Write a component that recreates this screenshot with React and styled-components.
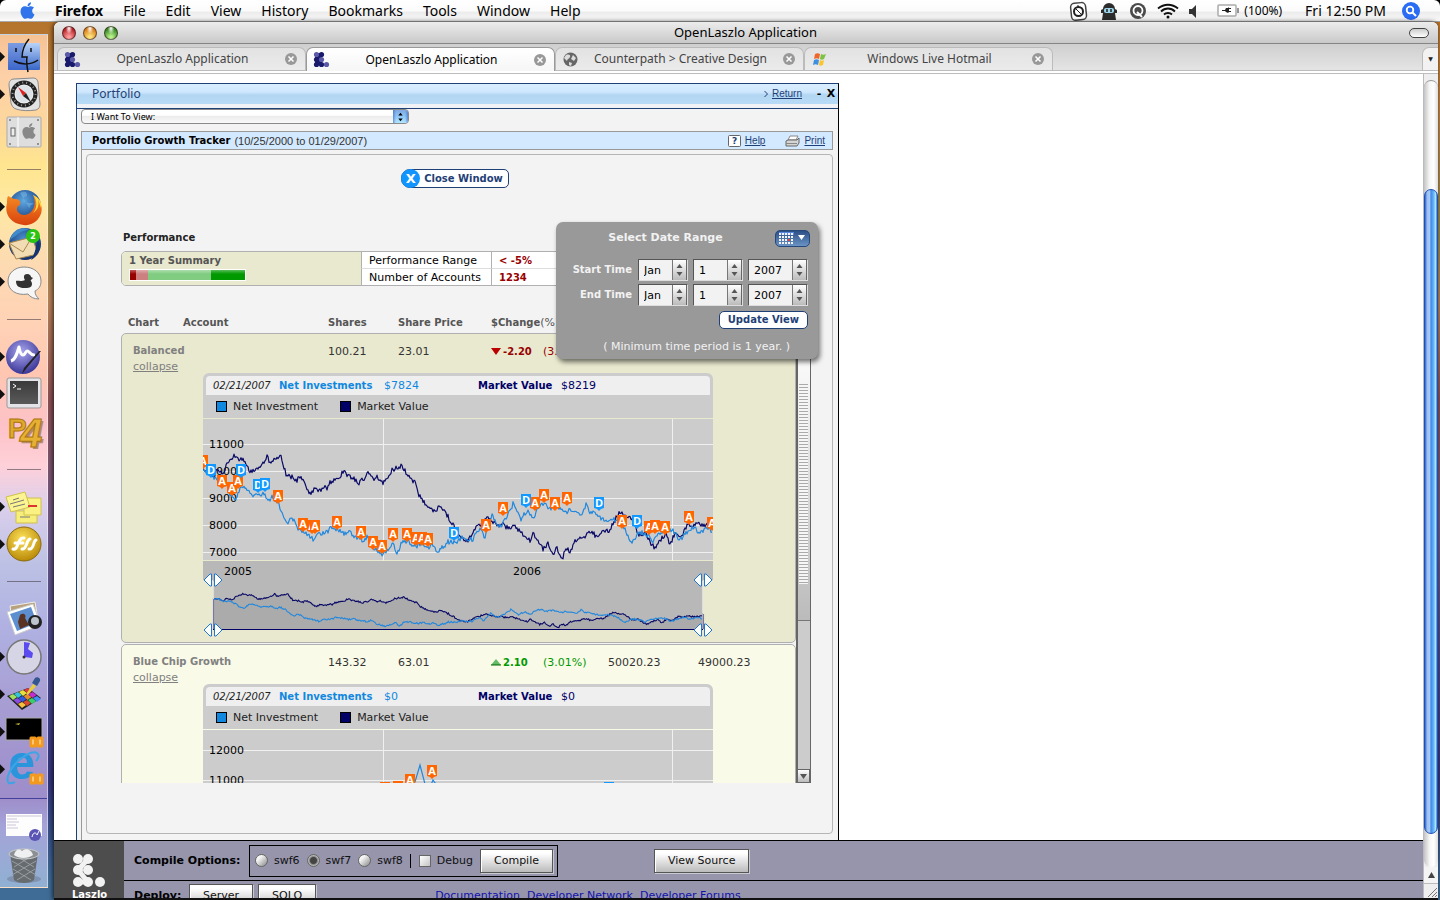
import React from "react";
import styled, { createGlobalStyle, css } from "styled-components";
import { FaApple } from "react-icons/fa";

const flash = `Verdana, "DejaVu Sans", sans-serif`;
const mac = `"Lucida Grande", "Noto Sans", sans-serif`;
const arial = `"Liberation Sans", Arial, sans-serif`;
const navy = "#1f3f77";

const Global = createGlobalStyle`
  *, *::before, *::after { box-sizing: border-box; }
  body { margin: 0; background: #000; }
  button, select, input { font: inherit; color: inherit; margin: 0; }
`;

/* ---------- desktop ---------- */

const Desktop = styled.div`
  height: 100vh;
  display: flex;
  flex-direction: column;
  overflow: hidden;
  font-family: ${flash};
  font-size: 11px;
  line-height: 16px;
  color: #222;
`;

const MenuBar = styled.nav`
  flex: none;
  height: 22px;
  display: flex;
  align-items: center;
  gap: 20px;
  padding: 0 20px;
  border-bottom: 1px solid #a8a8a8;
  border-radius: 6px 6px 0 0;
  background: linear-gradient(#fff 0, #fbfbfb 50%, #ececec 60%, #fafafa 100%);
  font-family: ${mac};
  font-size: 14px;
  line-height: 20px;
  color: #000;
`;

const MenuItem = styled.a`
  color: inherit;
  text-decoration: none;
  font-weight: ${(p) => (p.$strong ? 700 : 400)};
`;

const AppleMark = styled.span`
  display: flex;
  width: 15px;
  color: #2f74ea;
`;

const StatusArea = styled.div`
  margin-left: auto;
  display: flex;
  align-items: center;
  gap: 13px;
`;

const Battery = styled.span`
  display: flex;
  align-items: center;
  gap: 5px;
  margin-left: 4px;
  font-size: 12px;
`;

const Clock = styled.time`
  margin: 0 3px 0 10px;
`;

const Workspace = styled.div`
  flex: 1;
  min-height: 0;
  display: flex;
  padding-right: 2px;
  background: linear-gradient(#b5742c 0, #bf8144 80px, #98894c 210px, #b98259 280px, #8b5055 380px,
    #705a86 500px, #46468c 640px, #33357c 760px, #3f6c96 860px);
`;

/* ---------- dock ---------- */

const Dock = styled.aside`
  flex: none;
  width: 48px;
  margin: 12px 6px 12px 0;
  border: 1px solid rgba(255, 255, 255, 0.45);
  border-left: 0;
  background: linear-gradient(#f6c294 0, #fdd0a8 40px, #fdd79c 90px, #ffe58f 130px, #ffe9a3 170px,
    #fddab2 230px, #ffd2b6 290px, #ffc6b2 340px, #fdc2c8 390px, #ffd0d8 430px, #dccfec 470px,
    #bcc1e4 530px, #b0b1e2 590px, #a79dd3 670px, #9d8dca 763px, #a5a3d8 790px, #90b0d2 852px);
`;

const DockApps = styled.ul`
  list-style: none;
  margin: 3px 0 0;
  padding: 0;
  height: 750px;
  display: grid;
  grid-auto-rows: 1fr;
`;

const DockSlot = styled.li`
  display: flex;
  align-items: center;
`;

const RunMark = styled.span`
  width: 5px;
  height: 10px;
  margin-right: 1px;
  background: ${(p) => (p.$on ? "#111" : "transparent")};
  clip-path: polygon(0 0, 100% 50%, 0 100%);
`;

const DockRule = styled.span`
  width: 34px;
  height: 1px;
  margin-left: 1px;
  background: rgba(60, 50, 60, 0.55);
`;

const DockShelf = styled(DockApps)`
  height: 92px;
  margin: 10px 0 0;
  padding: 10px 0 6px;
  border-top: 1px solid #45409a;
`;

/* ---------- browser window ---------- */

const Browser = styled.main`
  flex: 1;
  min-width: 0;
  display: flex;
  flex-direction: column;
  background: #fff;
  border-radius: 6px 6px 0 0;
  border-bottom: 2px solid #111;
  box-shadow: -1px 0 5px rgba(0, 0, 0, 0.75);
`;

const TitleBar = styled.header`
  flex: none;
  height: 22px;
  display: flex;
  align-items: center;
  padding: 0 9px 0 8px;
  border-bottom: 1px solid #858585;
  border-radius: 6px 6px 0 0;
  background: linear-gradient(#ececec, #c9c9c9);
  font-family: ${mac};
  font-size: 13px;
  color: #000;
`;

const Lights = styled.div`
  width: 60px;
  display: flex;
  gap: 7px;
`;

const Light = styled.button`
  width: 14px;
  height: 14px;
  padding: 0;
  border: 1px solid rgba(40, 20, 20, 0.6);
  border-radius: 50%;
  background: radial-gradient(ellipse at 50% 12%, #fff 0, rgba(255, 255, 255, 0) 38%),
    radial-gradient(circle at 50% 85%, ${(p) => p.$glow} 10%, ${(p) => p.$tone} 70%);
`;

const WindowTitle = styled.h1`
  flex: 1;
  margin: 0;
  padding-bottom: 2px;
  text-align: center;
  font-size: 13px;
  font-weight: 400;
`;

const TitleEnd = styled.div`
  width: 60px;
  display: flex;
  justify-content: flex-end;
`;

const Pill = styled.button`
  width: 20px;
  height: 10px;
  padding: 0;
  border: 1px solid #444;
  border-radius: 5px;
  background: linear-gradient(#ccc, #fff);
`;

const TabStrip = styled.div`
  flex: none;
  height: 30px;
  display: flex;
  align-items: flex-start;
  padding: 3px 0 0 3px;
  border-bottom: 1px solid #bdbdbd;
  background: linear-gradient(#cfcfcf 0, #e4e4e4 26px, #bdbdbd 26px, #bdbdbd 27px, #fff 27px);
`;

const Tab = styled.div`
  flex: 0 1 249px;
  min-width: 0;
  height: 23px;
  display: flex;
  align-items: center;
  gap: 6px;
  padding: 0 8px 0 7px;
  border: 1px solid #bbb;
  border-bottom: 0;
  border-radius: 7px 7px 0 0;
  background: ${(p) => (p.$active ? "linear-gradient(#fff, #f6f6f6)" : "linear-gradient(#e2e2e2, #ebebeb)")};
  font-family: ${mac};
  font-size: 12px;
  color: ${(p) => (p.$active ? "#000" : "#444")};
  ${(p) => p.$active && css`height: 24px; border-color: #999;`}
`;

const TabLabel = styled.span`
  flex: 1;
  text-align: center;
  white-space: nowrap;
  overflow: hidden;
`;

const TabClose = styled.button`
  display: flex;
  padding: 0;
  border: 0;
  background: none;
`;

const TabMenu = styled.button`
  width: 16px;
  height: 23px;
  margin-left: auto;
  padding: 0;
  border: 1px solid #bbb;
  border-width: 1px 0 0 1px;
  border-radius: 7px 0 0 0;
  background: #f2f2f2;
  font-size: 6px;
  line-height: 10px;
`;

const Viewport = styled.div`
  flex: 1;
  min-height: 0;
  display: flex;
`;

const Page = styled.div`
  flex: 1;
  min-width: 0;
  display: flex;
  flex-direction: column;
`;

const PageBody = styled.div`
  flex: 1;
  min-height: 0;
  overflow: hidden;
  padding: 9px 22px 0;
`;

const ScrollRail = styled.div`
  flex: none;
  width: 15px;
  display: flex;
  flex-direction: column;
  border-left: 1px solid #bbb;
  background: #eee;
`;

const ScrollTrack = styled.div`
  flex: 1;
  margin-top: 6px;
  padding: 108px 0 33px;
  border-top: 1px solid #999;
  border-radius: 8px;
  background: linear-gradient(90deg, #c4c4c4, #f6f6f6 40%, #fff 70%, #ddd);
  display: flex;
`;

const ScrollThumb = styled.div`
  flex: 1;
  border-radius: 7px;
  border: 1px solid #1d4fb4;
  background: linear-gradient(90deg, #2d62cf 0, #9dc0f2 18%, #a9c9f6 38%, #3f8ae8 50%, #66b4fb 72%, #a8e4ff 88%, #4777b8);
`;

const ScrollEnd = styled.button`
  flex: none;
  height: 17px;
  padding: 0;
  border: 0;
  border-bottom: 1px solid #bbb;
  background: #f4f4f4;
  display: flex;
  align-items: center;
  justify-content: center;
`;

/* ---------- portfolio panel ---------- */

const Panel = styled.section`
  width: 100%;
  max-width: 763px;
  border: 1px solid ${navy};
  border-right-color: #000;
  background: #f3f3f3;
`;

const PanelHead = styled.header`
  height: 25px;
  display: flex;
  padding: 0 1px 4px 15px;
  align-items: center;
  border-bottom: 1px solid ${navy};
  background: linear-gradient(#d9eeff 0, #cfe7fd 40%, #b3d6f3 55%, #b7daf6 100%) 0 0 / 100% 20px no-repeat #f0f2f5;
`;

const PanelName = styled.h2`
  margin: 0 auto 0 0;
  font-family: ${mac};
  font-size: 12px;
  font-weight: 400;
  color: ${navy};
`;

const TextLink = styled.a`
  font-family: ${arial};
  font-size: 10px;
  color: ${navy};
`;

const Chevron = styled.svg`
  margin-right: 4px;
`;

const WindowKey = styled.button`
  width: 12px;
  padding: 0;
  border: 0;
  background: none;
  font-size: 11px;
  font-weight: 700;
  line-height: 16px;
  color: #000;
`;

const WindowKeys = styled.div`
  display: flex;
  margin-left: 11px;
`;

const ViewPicker = styled.div`
  width: 328px;
  height: 15px;
  margin-left: 4px;
  display: flex;
  border: 1px solid #8a8a8a;
  border-radius: 4px;
  overflow: hidden;
  background: linear-gradient(#fff 0, #fff 40%, #ececec 50%, #fafafa 100%);
`;

const bareSelect = css`
  appearance: none;
  flex: 1;
  min-width: 0;
  border: 0;
  border-radius: 0;
  background: transparent;
  color: #000;
`;

const ViewSelect = styled.select`
  ${bareSelect}
  padding: 0 0 0 9px;
  font-family: ${mac};
  font-size: 9px;
  line-height: 12px;
`;

const PickerCap = styled.span`
  width: 15px;
  display: flex;
  align-items: center;
  justify-content: center;
  background: linear-gradient(90deg, rgba(30, 80, 180, 0.5), transparent 20% 80%, rgba(30, 80, 180, 0.5)),
    linear-gradient(#7fa8e0, #8fc6f6 50%, #b4e6ff);
  pointer-events: none;
`;

const Tracker = styled.div`
  margin: 7px 5px 0 4px;
  border-left: 1px solid #999;
  padding-bottom: 20px;
`;

const TrackerHead = styled.header`
  height: 19px;
  display: flex;
  align-items: center;
  padding: 0 7px 0 10px;
  border: 1px solid #999;
  border-left: 0;
  background: #d3e9ff;
`;

const TrackerTitle = styled.h3`
  margin: 0;
  font-size: 10px;
  color: #000;
`;

const TrackerDates = styled.span`
  margin: 0 auto 0 4px;
  font-family: ${arial};
  font-size: 11px;
  color: #333;
`;

const IconLink = styled.span`
  display: flex;
  align-items: center;
  gap: 4px;
  margin-left: 20px;
`;

const Sheet = styled.div`
  position: relative;
  margin: 4px 0 0 4px;
  padding: 14px 21px 50px 34px;
  border: 1px solid #b5b5b5;
  border-radius: 4px;
`;

const CloseRow = styled.div`
  display: flex;
  justify-content: center;
  padding-right: 22px;
`;

const CloseWindow = styled.button`
  height: 19px;
  display: flex;
  align-items: center;
  gap: 4px;
  padding: 0 5px 0 0;
  border: 1px solid ${navy};
  border-radius: 9px 5px 5px 9px;
  background: #fff;
  color: ${navy};
  font-size: 10px;
  font-weight: 700;
`;

const CloseBadge = styled.span`
  width: 19px;
  height: 19px;
  margin-left: -1px;
  border-radius: 50%;
  background: #1294ff;
  color: #fff;
  font-size: 13px;
  line-height: 19px;
`;

const SectionTitle = styled.h3`
  margin: 42px 0 5px 2px;
  font-size: 10px;
  line-height: 16px;
  color: #222;
`;

const SummaryTable = styled.table`
  width: 675px;
  height: 35px;
  border-collapse: separate;
  border-spacing: 0;
  border: 1px solid #b0b0b0;
  border-radius: 5px;
  background: #fff;
  table-layout: fixed;
  color: #000;
`;

const SummaryCell = styled.td`
  width: ${(p) => p.$width || "auto"};
  height: 16px;
  padding: 1px 7px 0;
  line-height: 15px;
  border-left: 1px solid #b0b0b0;
  border-bottom: ${(p) => (p.$last ? 0 : "1px solid #ddd")};
  ${(p) => p.$strong && css`font-weight: 700; font-size: 10px; color: #990000;`}
`;

const YearCell = styled.th`
  width: 239px;
  padding: 0 7px;
  text-align: left;
  vertical-align: top;
  border-radius: 4px 0 0 4px;
  background: #e9e9cf;
  color: #555;
  font-size: 10px;
  line-height: 17px;
`;

const Gauge = styled.div`
  width: 117px;
  height: 12px;
  display: flex;
  border: 1px solid #fff;
`;

const GaugePart = styled.span`
  flex: ${(p) => p.$share};
  background: linear-gradient(rgba(255, 255, 255, 0.35), rgba(255, 255, 255, 0) 40%), ${(p) => p.$tone};
`;

/* ---------- holdings ---------- */

const Holdings = styled.div`
  display: flex;
  margin-top: 28px;
`;

const HoldingsTable = styled.table`
  display: block;
  flex: 1;
`;

const rowGrid = css`
  display: grid;
  grid-template-columns: 55px 145px 70px 93px 52px 65px 90px 1fr;
`;

const HeadRow = styled.tr`
  ${rowGrid}
  height: 19px;
  padding-left: 7px;
`;

const HeadGroup = styled.thead`
  display: block;
`;

const HeadCell = styled.th`
  padding: 0;
  text-align: left;
  white-space: nowrap;
  font-size: 10px;
  line-height: 18px;
  color: #555;
`;

const HeadNote = styled.span`
  font-weight: 400;
  font-size: 11px;
`;

const ScrollBody = styled.tbody`
  display: flex;
  flex-direction: column;
  gap: 1px;
  height: 450px;
  overflow: hidden;
`;

const HoldingRow = styled.tr`
  ${rowGrid}
  flex: none;
  grid-template-rows: 16px 14px auto;
  padding: 9px 0 4px 6px;
  border: 1px solid #b0b0b0;
  border-radius: 5px;
  background: ${(p) => (p.$tinted ? "#e9e9cf" : "#fafae9")};
`;

const tones = { down: "#990000", up: "#009900", plain: "#333" };

const Cell = styled.td`
  padding: 0;
  white-space: nowrap;
  line-height: 18px;
  color: ${(p) => tones[p.$tone || "plain"]};
`;

const NameCell = styled.th`
  grid-column: 1 / 3;
  padding: 0 0 0 5px;
  text-align: left;
  font-size: 10px;
  color: #808080;
`;

const CollapseCell = styled.td`
  grid-column: 1 / -1;
  padding: 0 0 0 5px;
`;

const CollapseKey = styled.button`
  display: block;
  padding: 0;
  border: 0;
  background: none;
  text-decoration: underline;
  color: #808080;
`;

const ChartCell = styled.td`
  grid-column: 1 / -1;
  padding: 0 0 0 75px;
`;

const Delta = styled.b`
  font-size: 10px;
  margin-left: 2px;
`;

const ListBar = styled.div`
  width: 15px;
  margin-top: 19px;
  display: flex;
  flex-direction: column;
  border-left: 2px solid #666;
  border-right: 1px solid #666;
  background: #ccc;
`;

const ListThumb = styled.div`
  height: 288px;
  padding-top: 51px;
  border-bottom: 1px solid #777;
  background: linear-gradient(#fff 0, #f4f4f4 20%, #bbb 100%);
`;

const ThumbGrip = styled.div`
  height: 200px;
  margin: 0 2px 0 1px;
  background: repeating-linear-gradient(#aaa 0 1px, #f6f6f6 1px 3px);
`;

const ListDown = styled.button`
  height: 14px;
  margin-top: auto;
  padding: 0;
  border: 1px solid #666;
  border-left: 0;
  background: linear-gradient(#fff, #bbb);
  display: flex;
  align-items: center;
  justify-content: center;
`;

/* ---------- chart ---------- */

const ChartBox = styled.div`
  width: 510px;
  border-radius: 6px 6px 0 0;
  background: linear-gradient(#ccc, #ccc) 0 0 / 100% 187px no-repeat;
`;

const ReadOut = styled.div`
  margin: 0 3px;
  padding: 3px 0 0;
`;

const ReadOutStrip = styled.div`
  height: 19px;
  display: grid;
  grid-template-columns: 66px 105px 94px 83px auto;
  padding-left: 7px;
  line-height: 19px;
  border-radius: 4px 4px 0 0;
  background: #efefef;
`;

const ReadOutDate = styled.em`
  font-size: 10px;
  color: #222;
`;

const ReadOutItem = styled.span`
  color: ${(p) => p.$tone};
  font-weight: ${(p) => (p.$strong ? 700 : 400)};
  font-size: ${(p) => (p.$strong ? "10px" : "11px")};
`;

const Legend = styled.div`
  height: 24px;
  display: flex;
  align-items: center;
  gap: 22px;
  padding-left: 13px;
  border-bottom: 1px solid ${(p) => (p.$tinted ? "#e9e9cf" : "#fafae9")};
`;

const LegendItem = styled.span`
  display: flex;
  align-items: center;
  gap: 6px;
`;

const Swatch = styled.span`
  width: 11px;
  height: 11px;
  border: 1px solid #000;
  background: ${(p) => p.$tone};
`;

const Plot = styled.svg`
  display: block;
  font-family: ${flash};
  font-size: 11px;
`;

/* ---------- date range ---------- */

const DateRange = styled.form`
  position: absolute;
  top: 67px;
  right: 14px;
  width: 262px;
  padding: 7px 10px 4px 0;
  border-radius: 7px;
  background: #999;
  box-shadow: 2px 3px 5px rgba(0, 0, 0, 0.55);
  color: #f2f2f2;
`;

const RangeHead = styled.div`
  display: flex;
  align-items: center;
  height: 18px;
  margin: 0 -2px 12px 0;
`;

const RangeTitle = styled.h4`
  flex: 1;
  margin: 0;
  text-align: center;
  font-size: 11px;
`;

const CalendarKey = styled.button`
  width: 35px;
  height: 17px;
  padding: 0;
  border: 1px solid #24477c;
  border-radius: 5px;
  background: linear-gradient(#2c4f86, #6b93c4);
  display: flex;
  align-items: center;
  justify-content: center;
`;

const RangeRow = styled.fieldset`
  display: grid;
  grid-template-columns: 1fr 50px 50px 60px;
  column-gap: 5px;
  align-items: center;
  margin: 0 0 3px;
  padding: 0;
  border: 0;
`;

const RangeLabel = styled.label`
  text-align: right;
  padding-right: 1px;
  font-size: 10px;
  font-weight: 700;
`;

const SpinBox = styled.span`
  height: 22px;
  display: flex;
  border: 1px solid #555;
  border-right-color: #ddd;
  border-bottom-color: #ddd;
  background: #f2f2f2;
`;

const SpinSelect = styled.select`
  ${bareSelect}
  padding: 1px 0 0 5px;
`;

const SpinArrows = styled.span`
  width: 15px;
  display: flex;
  align-items: center;
  justify-content: center;
  border-left: 1px solid #777;
  border-right: 1px solid #666;
  background: linear-gradient(#fff, #bbb);
  pointer-events: none;
`;

const UpdateKey = styled.button`
  display: block;
  height: 18px;
  margin: 5px 0 0 auto;
  padding: 0 8px;
  border: 1px solid ${navy};
  border-radius: 5px;
  background: #fff;
  color: ${navy};
  font-size: 10px;
  font-weight: 700;
  line-height: 16px;
`;

const RangeNote = styled.p`
  margin: 10px 18px 0 0;
  text-align: right;
`;

/* ---------- compile footer ---------- */

const Footer = styled.footer`
  flex: none;
  height: 58px;
  display: flex;
  overflow: hidden;
  border-top: 1px solid #000;
  background: #9695ac;
  color: #111;
`;

const Brand = styled.div`
  flex: none;
  width: 70px;
  padding: 13px 0 0 18px;
  background: #4d4d4d;
  color: #fff;
  font-size: 10px;
  font-weight: 700;
  line-height: 16px;
`;

const FooterRows = styled.div`
  flex: 1;
`;

const FooterRow = styled.div`
  height: 40px;
  display: flex;
  align-items: center;
  padding-left: 10px;
  border-bottom: 1px solid #000;
  white-space: nowrap;
`;

const DeployRow = styled(FooterRow)`
  height: 31px;
`;

const FooterLabel = styled.b`
  width: ${(p) => p.$width};
  font-size: 11px;
  color: #000;
`;

const Options = styled.form`
  height: 32px;
  display: flex;
  align-items: center;
  padding: 0 4px 0 5px;
  margin-right: 96px;
  border: 1px solid #000;
`;

const Choice = styled.label`
  display: flex;
  align-items: center;
  gap: 6px;
  margin-right: 7px;
`;

const Radio = styled.input.attrs({ type: "radio" })`
  appearance: none;
  width: 13px;
  height: 13px;
  border: 1px solid #666;
  border-radius: 50%;
  background: linear-gradient(135deg, #f4f4f4 30%, #888);
  &:checked {
    background: radial-gradient(circle, #444 0 3px, #888 4px, #b5b5b5 5px);
  }
`;

const Check = styled.input.attrs({ type: "checkbox" })`
  appearance: none;
  width: 12px;
  height: 12px;
  border: 1px solid #666;
  background: linear-gradient(135deg, #fff, #c4c4c4);
`;

const Divider = styled.span`
  width: 1px;
  height: 14px;
  margin-right: 8px;
  background: #000;
`;

const FlashKey = styled.button`
  height: 24px;
  padding: 0 13px;
  margin-right: ${(p) => p.$gap || "0"};
  border: 1px solid #555;
  background: linear-gradient(#fff 15%, #bbb);
  box-shadow: 1px 1px 0 #c9c9d2, inset 1px 1px 0 #fff;
  color: #111;
`;

const DocLinks = styled.div`
  display: flex;
  gap: 7px;
  margin-left: 119px;
`;

const DocLink = styled.a`
  color: #1111aa;
  text-decoration: none;
`;

/* ---------- chart data ---------- */

const market = [
  [0, 52], [5, 51], [10, 59], [14, 49], [17, 53], [20, 54], [24, 46], [27, 41], [31, 37], [35, 40], [40, 39], [44, 48],
  [47, 52], [54, 49], [59, 46], [62, 41], [64, 38], [68, 45], [72, 39], [77, 36], [79, 41], [83, 55], [89, 58], [94, 61],
  [97, 58], [102, 65], [107, 74], [112, 70], [117, 72], [122, 68], [124, 69], [127, 64], [130, 61], [137, 59], [141, 50],
  [145, 58], [150, 58], [155, 64], [160, 61], [165, 55], [170, 60], [175, 58], [180, 64], [185, 60], [189, 51], [194, 49],
  [199, 46], [204, 56], [208, 60], [213, 64], [216, 76], [222, 84], [230, 93], [237, 87], [244, 96], [247, 101], [251, 108],
  [257, 118], [265, 122], [272, 110], [277, 106], [283, 98], [289, 102], [293, 106], [297, 108], [300, 104], [305, 110],
  [312, 107], [320, 116], [327, 122], [330, 114], [335, 121], [340, 131], [345, 125], [350, 134], [354, 130], [359, 141],
  [363, 129], [367, 132], [372, 123], [380, 119], [387, 113], [394, 117], [400, 112], [407, 111], [412, 101], [415, 95],
  [420, 95], [427, 99], [432, 108], [435, 116], [442, 114], [447, 123], [452, 129], [459, 119], [463, 116], [467, 126],
  [472, 114], [479, 117], [485, 105], [490, 108], [494, 103], [500, 106], [509, 104],
];

const net = [
  [0, 53], [4, 51], [10, 58], [17, 59], [24, 68], [29, 79], [34, 79], [38, 66], [44, 69], [49, 76], [55, 76], [60, 74],
  [65, 81], [70, 78], [75, 84], [80, 96], [84, 104], [89, 99], [94, 108], [100, 114], [105, 116], [111, 121], [117, 114],
  [124, 113], [129, 108], [134, 111], [140, 114], [147, 114], [154, 118], [160, 121], [165, 118], [170, 128], [175, 132],
  [180, 136], [185, 131], [190, 124], [194, 134], [199, 123], [205, 123], [214, 128], [219, 123], [224, 129], [229, 126],
  [234, 132], [240, 128], [245, 123], [252, 124], [260, 118], [269, 121], [277, 110], [282, 118], [289, 96], [294, 107],
  [299, 106], [305, 96], [310, 85], [314, 91], [318, 100], [324, 91], [330, 99], [335, 89], [340, 84], [347, 90], [354, 86],
  [360, 93], [367, 92], [374, 94], [379, 95], [383, 85], [387, 94], [392, 93], [397, 98], [402, 103], [407, 99], [414, 102],
  [419, 106], [424, 114], [428, 123], [434, 116], [439, 113], [444, 116], [450, 122], [455, 116], [464, 111], [470, 111],
  [477, 121], [484, 113], [490, 108], [497, 114], [504, 108], [509, 113],
];

/* Fills in a day-by-day wobble between the sampled values. */
function daily(points, seed) {
  let s = seed;
  const rand = () => {
    s = (s * 16807) % 2147483647;
    return s / 2147483647 - 0.5;
  };
  const out = [];
  for (let i = 0; i < points.length - 1; i++) {
    const [x0, y0] = points[i];
    const [x1, y1] = points[i + 1];
    for (let x = x0; x < x1; x += 1) {
      const t = (x - x0) / (x1 - x0);
      out.push([x, y0 + (y1 - y0) * t + rand() * 5]);
    }
  }
  out.push(points[points.length - 1]);
  return out;
}

const toPath = (pts, fx = (x) => x, fy = (y) => y) =>
  pts.map(([x, y], i) => `${i ? "L" : "M"}${fx(x).toFixed(1)} ${fy(y).toFixed(1)}`).join("");

const marketDaily = daily(market, 71);
const netDaily = daily(net, 1234);
const ox = (x) => 10 + (x * 490) / 510;
const oy = (y) => 33 + (y - 37) * 0.327;

const markersA = [
  [0, 42], [19, 62], [29, 69], [35, 62], [75, 77], [100, 105], [109, 107], [112, 107], [134, 103], [158, 113], [170, 123],
  [179, 127], [190, 115], [204, 115], [213, 119], [219, 119], [225, 120], [283, 106], [300, 89], [332, 84], [341, 76],
  [352, 84], [364, 79], [419, 102], [446, 108], [452, 107], [462, 108], [486, 98], [509, 104],
];
const markersD = [[8, 51], [38, 51], [55, 66], [62, 65], [251, 114], [323, 81], [396, 84], [434, 102]];

function Marker({ x, y, kind }) {
  return (
    <g transform={`translate(${x} ${y})`}>
      <path d="M-5-6H5V5L2 6 0 8-2 6-5 5z" fill={kind === "A" ? "#ff6600" : "#1199ff"} />
      <text y="4" textAnchor="middle" fontSize="11" fontWeight="700" fill="#fff" fontFamily="Open Sans">
        {kind}
      </text>
    </g>
  );
}

function Grid({ lines, height }) {
  return (
    <>
      <g stroke="#f0f0f0">
        {lines.map(([y]) => (
          <path key={y} d={`M0 ${y + 0.5}H510`} />
        ))}
        <path d={`M180.500 0V${height}M469.500 0V${height}`} />
      </g>
      <g fill="#000">
        {lines.map(([y, label]) => (
          <text key={label} x="6" y={y + 4}>{label}</text>
        ))}
      </g>
    </>
  );
}

function Handle({ x, y }) {
  return (
    <g transform={`translate(${x} ${y})`} fill="#fff" stroke="#2277cc">
      <path d="M-1.500-6V6H-3L-9 0l6-6z" />
      <path d="M1.500-6V6H3L9 0 3-6z" />
    </g>
  );
}

function BalancedPlot() {
  const area = `${toPath(marketDaily, ox, oy)}L500 68L10 68z`;
  return (
    <Plot width="510" height="219" viewBox="0 0 510 219" role="img" aria-label="Balanced growth chart">
      <svg width="510" height="142">
        <Grid height={142} lines={[[25, "11000"], [52, "10000"], [79, "9000"], [106, "8000"], [133, "7000"]]} />
        <g fill="none" strokeWidth="1.200" strokeLinejoin="round">
          <path d={toPath(marketDaily)} stroke="#0a0a66" />
          <path d={toPath(netDaily)} stroke="#2288dd" />
        </g>
        {markersA.map(([x, y]) => <Marker key={`a${x}`} x={x} y={y} kind="A" />)}
        {markersD.map(([x, y]) => <Marker key={`d${x}`} x={x} y={y} kind="D" />)}
      </svg>
      <g transform="translate(0 142)">
        <path d="M0 0H510V19H500V68H10V19H0z" fill="#b8b8b8" />
        <path d={area} fill="#ababab" />
        <g fill="none" strokeWidth="1.100">
          <path d={toPath(marketDaily, ox, oy)} stroke="#0a0a66" />
          <path d={toPath(netDaily, ox, oy)} stroke="#2288dd" />
          <path d="M10.500 38V68M500.500 53V68" stroke="#7777aa" />
          <path d="M10.500 20V38M499.500 20V52" stroke="#ddd" />
          <path d="M10 68.500H500" stroke="#000066" />
        </g>
        <text x="21" y="14">2005</text>
        <text x="310" y="14">2006</text>
        <Handle x={10} y={19} />
        <Handle x={10} y={69} />
        <Handle x={500} y={19} />
        <Handle x={500} y={69} />
      </g>
    </Plot>
  );
}

function BlueChipPlot() {
  return (
    <Plot width="510" height="142" viewBox="0 0 510 142" role="img" aria-label="Blue Chip Growth chart">
      <Grid height={142} lines={[[20, "12000"], [50, "11000"], [80, "10000"], [110, "9000"]]} />
      <path d="M160 90L175 70 190 62 204 60 212 52 217 35 222 54 226 60 230 50 240 64" fill="none" stroke="#2288dd" strokeWidth="1.200" />
      <Marker x={182} y={58} kind="A" />
      <Marker x={195} y={57} kind="A" />
      <Marker x={207} y={50} kind="A" />
      <Marker x={229} y={41} kind="A" />
      <Marker x={406} y={58} kind="D" />
    </Plot>
  );
}

/* ---------- drawings ---------- */

const Art = styled.svg`
  flex: none;
  display: block;
  overflow: visible;
`;

const artBits = {
  finder: (
    <>
      <rect x="2" y="4" width="32" height="27" rx="1" fill="url(#gFinder)" />
      <path d="M2 4h17c-3 5-4 9-4 14h4l1 13H2z" fill="#3f66cc" opacity=".5" />
      <g fill="none" stroke="#111" strokeWidth="1.500">
        <path d="M23 0c-5 6-7 11-7 18h5c-1 5 0 10 1 15" />
        <path d="M8 22c7 4 17 4 24-1M10 9v4M25 9v4" />
      </g>
    </>
  ),
  compass: (
    <>
      <path d="M8 3L27 2c3 0 4 1 5 4l2 22c0 3-1 5-4 6-8 1-14 1-20-1-3-1-4-3-5-6L3 9c0-4 2-6 5-6z" fill="#e2e2e2" stroke="#8a8a8a" />
      <circle cx="18" cy="18" r="11.500" fill="#eee" stroke="#222" strokeWidth="4" />
      <circle cx="18" cy="18" r="11.500" fill="none" stroke="#999" strokeWidth="2" strokeDasharray="1 3" />
      <circle cx="18" cy="18" r="8.500" fill="#dce3e8" />
      <path d="M12 11l8 6-3 3z" fill="#d22" />
      <path d="M25 26l-8-6 3-3z" fill="#222" />
    </>
  ),
  prefs: (
    <>
      <rect x="1" y="3" width="34" height="30" rx="1" fill="#dedede" stroke="#aaa" />
      <path d="M12 3v30" stroke="#fff" />
      <rect x="5" y="14" width="4" height="8" fill="#eee" stroke="#666" />
      <FaApple x="14" y="8" size="18" color="#888" />
      <g fill="#777"><circle cx="4" cy="6" r="1" /><circle cx="32" cy="6" r="1" /><circle cx="4" cy="30" r="1" /><circle cx="32" cy="30" r="1" /></g>
    </>
  ),
  firefox: (
    <>
      <circle cx="19" cy="17" r="16" fill="url(#gGlobe)" />
      <path d="M14 4c5-3 8 0 7 3-4 1-5 4-2 6 4 2 7 0 9 2-4 0-6 4-3 7" fill="#79bde8" opacity=".5" />
      <path d="M2 7c3 1 5 3 7 3 4 0 6 2 5 6-3 1-4 4-2 7 3 4 9 4 13 0 4-4 5-11 2-17 8 5 11 14 7 21-4 8-13 11-21 8C4 33-2 24 1 14c0-3 0-5 1-7z" fill="url(#gFox)" />
      <path d="M27 6c5 6 4 14 0 18 6-4 6-9 5-14l3 9c2-6-3-11-8-13z" fill="#ffd83c" />
    </>
  ),
  bird: (
    <>
      <circle cx="19" cy="18" r="16" fill="url(#gBird)" />
      <path d="M3 17l23-6 6 17-22 5z" fill="#f2dcb4" stroke="#a9864d" />
      <path d="M3 17l14 9 9-15" fill="none" stroke="#a9864d" />
      <path d="M4 14C7 3 16 0 23 4c-7 0-11 4-19 10z" fill="#3f8bcc" />
      <path d="M31 12c5 8 3 17-6 22 4-7 6-14 6-22z" fill="#12356f" />
      <circle cx="27" cy="10" r="7" fill="#2cc414" />
      <text x="27" y="13" textAnchor="middle" fontSize="8" fontWeight="700" fill="#fff">2</text>
    </>
  ),
  duck: (
    <>
      <path d="M18 3c10 0 17 6 17 14 0 5-2 8-6 10 0 4 2 6 4 8-5 0-9-2-11-5C10 32 2 26 2 17 2 9 9 3 18 3z" fill="#f6f6f6" stroke="#888" />
      <path d="M10 17c1-1 5 1 9-1-2-3-1-6 2-6s4 2 4 3l2 1-2 2c-1 1 1 1 1 4 0 4-4 4-8 4-5 0-8-2-8-7z" fill="#333" />
    </>
  ),
  sphere: (
    <>
      <circle cx="17" cy="18" r="17" fill="url(#gSphere)" />
      <path d="M5 22c4-1 6-7 8-14 1 6 2 8 4 8s2-3 4-4 3 5 8 4" fill="none" stroke="#fff" strokeWidth="3" strokeLinejoin="round" />
      <path d="M35 12L20 30l-4 5 2-6L33 12z" fill="#222" />
    </>
  ),
  terminal: (
    <>
      <rect x="1" y="2" width="34" height="30" rx="2" fill="#e4e4e8" stroke="#999" />
      <rect x="4" y="5" width="28" height="23" fill="url(#gTerm)" />
      <path d="M7 8l3 2-3 2M11 13h4" fill="none" stroke="#fff" />
    </>
  ),
  p4: (
    <g fontWeight="700" fontFamily="Liberation Sans">
      <text x="2" y="24" fontSize="28" fill="#e0a92c" stroke="#a8740c">P</text>
      <text x="16" y="35" fontSize="40" fontStyle="italic" fill="#6b5010" opacity=".5">4</text>
      <text x="14" y="33" fontSize="40" fontStyle="italic" fill="#e6b035" stroke="#a8740c">4</text>
    </g>
  ),
  notes: (
    <>
      <path d="M10 22h21v12H10z" fill="#f7ee7b" stroke="#cfc14c" />
      <path d="M18 9h17v17H18z" fill="#fbf182" stroke="#cfc14c" />
      <path d="M0 8l19-5 5 15-19 5z" fill="#fbf491" stroke="#cfc14c" />
      <path d="M7 11l6-2M4 15l14-4M7 18l12-3M14 28h10" stroke="#777" />
      <path d="M22 17h9" stroke="#d33" strokeWidth="2" />
    </>
  ),
  gold: (
    <>
      <circle cx="18" cy="18" r="17" fill="url(#gGold)" stroke="#8a6a10" />
      <path d="M7 23c6 2 4-12 11-11M9 17h8M16 23c5 1 4-9 8-10M23 23c5 1 4-8 7-9" fill="none" stroke="#fff" strokeWidth="3" strokeLinecap="round" />
    </>
  ),
  photos: (
    <>
      <path d="M4 5l25-4 3 18-25 4z" fill="#b8a27c" stroke="#eee" />
      <path d="M1 11l26-8 8 21-26 10z" fill="#fff" stroke="#ccc" />
      <path d="M4 13l21-7 6 16-20 8z" fill="#5d8fd0" />
      <path d="M14 14c3-3 7 0 5 3l4 7-9 4-2-7z" fill="#5a3322" />
      <circle cx="29" cy="21" r="7" fill="#222" />
      <circle cx="29" cy="20" r="4" fill="#bcc4cc" />
    </>
  ),
  clock: (
    <>
      <circle cx="18" cy="18" r="17" fill="#d5d5e6" stroke="#777" strokeWidth="1.500" />
      <path d="M18 18V3l6 1-2 6 5 4-1 5z" fill="#5a4af0" />
      <circle cx="18" cy="18" r="1.500" fill="#333" />
    </>
  ),
  palette: (
    <>
      <path d="M1 20l21-8 13 10-19 12z" fill="#222" />
      {["#9fe060", "#35c4d8", "#e9e03c", "#e23b3b", "#8a4be0", "#2f5be0", "#e88a2c", "#c42bd0", "#f5c13a", "#d8482c", "#34d06a", "#3f8df0"].map((c, i) => (
        <path key={c} transform={`translate(${3 + (i % 4) * 5 + Math.floor(i / 4) * 4.500} ${20 - (i % 4) * 2 + Math.floor(i / 4) * 4})`} d="M0 0l4-2 4 3-4 3z" fill={c} />
      ))}
      <path d="M20 18l7-10 3 2-8 9z" fill="#e8cf3a" />
      <path d="M26 7l3-5c2-2 6 0 5 3l-3 5z" fill="#34568f" />
    </>
  ),
  console: (
    <>
      <rect x="0" y="4" width="36" height="22" fill="#000" stroke="#aaa" />
      <path d="M9 10l5-1-1 2z" fill="#cb4" />
      <Badge />
    </>
  ),
  explorer: (
    <>
      <text x="2" y="28" fontSize="48" fontWeight="700" fill="#2b95dc" fontFamily="Liberation Sans">e</text>
      <path d="M9 31C-1 36 0 26 6 17 13 7 26-1 31 2c3 2 1 6-1 8" fill="none" stroke="#3ba5e6" strokeWidth="2" />
      <Badge />
    </>
  ),
  shot: (
    <>
      <rect x="0" y="4" width="36" height="22" fill="#fdfdfd" />
      <path d="M1 6h34M1 9h10M1 12h12M1 15h9M1 18h11" stroke="#cbc5d8" />
      <circle cx="29" cy="25" r="6" fill="#5a54b4" />
      <path d="M26 27c1-5 4-5 5-2l2-4" fill="none" stroke="#fff" />
    </>
  ),
  trash: (
    <>
      <ellipse cx="18" cy="32" rx="17" ry="4" fill="#556" opacity=".3" />
      <path d="M4 6l4 27c4 4 16 4 20 0l4-27z" fill="#666b70" />
      <path d="M6 14l24 14M7 22l18 11M30 14L6 28M29 22L11 33M12 10l16 10M24 10L8 20" stroke="#9a9ea2" />
      <ellipse cx="18" cy="7" rx="15" ry="5" fill="#8c9094" stroke="#ccc" />
      <path d="M8 8c1-5 5-7 8-4 4-4 10-1 11 4-5 4-14 4-19 0z" fill="#eef0f2" />
    </>
  ),
};

function Badge() {
  return (
    <g fill="none" stroke="#f39a1e" strokeWidth="3" strokeLinejoin="round">
      <path d="M25 24h4v8h-4zM32 24h4v8h-4z" fill="#fff3d0" />
    </g>
  );
}

function ArtDefs() {
  const stops = {
    gFinder: ["#b9d3f8", "#3766c8"],
    gFox: ["#f58b25", "#d9420c"],
    gTerm: ["#3a3a3a", "#5a5a5a"],
  };
  const radials = {
    gGlobe: ["#5fa8e0", "#123a80"],
    gBird: ["#4a8fd0", "#122e6a"],
    gSphere: ["#a9a6ee", "#3b3798"],
    gGold: ["#ffe25a", "#b98a08"],
  };
  return (
    <Art width="0" height="0" aria-hidden="true">
      <defs>
        {Object.entries(stops).map(([id, [a, b]]) => (
          <linearGradient key={id} id={id} x1="0" y1="0" x2="0" y2="1">
            <stop stopColor={a} /><stop offset="1" stopColor={b} />
          </linearGradient>
        ))}
        {Object.entries(radials).map(([id, [a, b]]) => (
          <radialGradient key={id} id={id} cx=".45" cy=".35" r=".65">
            <stop stopColor={a} /><stop offset="1" stopColor={b} />
          </radialGradient>
        ))}
      </defs>
    </Art>
  );
}

function DockItem({ art, running }) {
  return (
    <DockSlot>
      {art ? (
        <>
          <RunMark $on={running} />
          <Art width="36" height="36" viewBox="0 0 36 36" aria-hidden="true">{artBits[art]}</Art>
        </>
      ) : (
        <><RunMark /><DockRule /></>
      )}
    </DockSlot>
  );
}

function LaszloTabIcon() {
  const dots = [[2, 2], [7, 2], [2, 7], [7, 7], [2, 12], [7, 12], [12, 12]];
  return (
    <Art width="15" height="15" viewBox="0 0 15 15" aria-hidden="true">
      <path d="M1 1h7v12H1z" fill="#1a1a6c" />
      {dots.map(([x, y], i) => <circle key={i} cx={x + 0.5} cy={y + 0.5} r="2.600" fill={i % 3 ? "#1a1a6c" : "#5a5aa8"} />)}
    </Art>
  );
}

function GlobeTabIcon() {
  return (
    <Art width="15" height="15" viewBox="0 0 15 15" aria-hidden="true">
      <circle cx="7.500" cy="7.500" r="7" fill="#666" />
      <path d="M3 3c3-1 5 0 4 2S4 7 4 9L1 6zM10 3l3 3-2 3-3-2zM6 10l3 1-1 3-2-1z" fill="#ddd" />
    </Art>
  );
}

function FlagTabIcon() {
  return (
    <Art width="15" height="15" viewBox="0 0 15 15" aria-hidden="true">
      <path d="M3 2c2-1 3-1 5 0L7 7C5 6 4 6 2 7z" fill="#f0652a" />
      <path d="M9 2c2 1 3 1 5 0l-2 5c-2 1-3 1-4 0z" fill="#7dc242" />
      <path d="M2 8c2-1 3-1 5 0l-1 5c-2-1-3-1-5 0z" fill="#3f8fe0" />
      <path d="M8 8c1 1 3 1 4 0l-1 5c-2 1-3 1-4 0z" fill="#fbc52d" />
    </Art>
  );
}

function StatusIcons() {
  return (
    <Art width="130" height="20" viewBox="0 0 130 20" aria-hidden="true">
      <rect x="1" y="2" width="15" height="17" rx="4" fill="#fff" stroke="#444" strokeWidth="1.500" transform="rotate(-6 8 10)" />
      <circle cx="8.500" cy="10.500" r="4.500" fill="none" stroke="#222" strokeWidth="2" />
      <path d="M6 8l5 5M8 4v2" stroke="#222" />
      <path d="M33 8a6 6 0 0 1 12 0l2 1v3h-2l1 7H32l1-7h-2V9z" fill="#2c2c2c" />
      <rect x="34" y="7" width="10" height="5" rx="2" fill="#9cd4ea" />
      <path d="M37 8v3M41 8v3" stroke="#222" strokeWidth="1.500" />
      <circle cx="68" cy="10" r="8" fill="#4a4a4a" />
      <circle cx="68" cy="9.500" r="4.500" fill="none" stroke="#fff" strokeWidth="1.800" />
      <path d="M67 11l5 5" stroke="#fff" strokeWidth="2" />
      <g fill="none" stroke="#111" strokeWidth="1.800">
        <path d="M88 7.500c6-5 14-5 20 0M91 10.500c4-4 10-4 14 0M94 13.500c2-2 6-2 8 0" />
      </g>
      <circle cx="98" cy="16" r="1.500" fill="#111" />
      <path d="M119 8h3l4-4v13l-4-4h-3z" fill="#333" />
    </Art>
  );
}

function BatteryIcon() {
  return (
    <Art width="22" height="13" viewBox="0 0 22 13" aria-hidden="true">
      <rect x="1" y="1" width="18" height="11" rx="1" fill="#fff" stroke="#aaa" strokeWidth="1.500" />
      <path d="M21 4v5" stroke="#777" strokeWidth="1.500" />
      <path d="M5 6h3l1-2h2V3l1 1h2v1h-2v1l-0 1h2v1h-2l-1 1-2-1L8 7H5z" fill="#222" />
    </Art>
  );
}

function SearchIcon() {
  return (
    <Art width="18" height="18" viewBox="0 0 18 18" aria-hidden="true">
      <circle cx="9" cy="9" r="9" fill="#2a6cf4" />
      <circle cx="8" cy="8" r="3.300" fill="none" stroke="#fff" strokeWidth="1.800" />
      <path d="M10.500 10.500l3.500 3.500" stroke="#fff" strokeWidth="2" />
    </Art>
  );
}

function CloseIcon() {
  return (
    <svg width="12" height="12" viewBox="0 0 12 12" aria-hidden="true">
      <circle cx="6" cy="6" r="6" fill="#989898" />
      <path d="M3.500 3.500l5 5M8.500 3.500l-5 5" stroke="#fff" strokeWidth="1.500" />
    </svg>
  );
}

function UpDown({ size = 9, color = "#555" }) {
  return (
    <svg width={size - 2} height={size + 3} viewBox="0 0 7 12" aria-hidden="true">
      <path d="M3.500 0L6.500 4H.5zM3.500 12L6.500 8H.5z" fill={color} />
    </svg>
  );
}

function CalendarIcon() {
  return (
    <svg width="29" height="12" viewBox="0 0 29 12" aria-hidden="true">
      <rect x="1" y="0" width="15" height="3" fill="#5b86e0" />
      {[0, 1, 2, 3, 4].map((c) => [0, 1, 2, 3].map((r) => (
        <rect key={`${c}${r}`} x={1 + c * 3} y={1 + r * 3} width="2" height="2" fill={c === 3 && r === 2 ? "#e04040" : "#f4f4ff"} />
      )))}
      <path d="M20 3h7l-3.500 5z" fill="#fff" />
    </svg>
  );
}

function HelpIcon() {
  return (
    <svg width="13" height="12" viewBox="0 0 13 12" aria-hidden="true">
      <rect x=".5" y=".5" width="12" height="11" rx="1" fill="#fff" stroke="#666" />
      <text x="6.500" y="9" textAnchor="middle" fontSize="9" fontWeight="700" fill={navy}>?</text>
    </svg>
  );
}

function PrintIcon() {
  return (
    <svg width="15" height="12" viewBox="0 0 15 12" aria-hidden="true">
      <path d="M5 1h8l-2 4H3z" fill="#fff" stroke="#888" />
      <path d="M1 6l2-1h9l2-2v5l-2 3H1z" fill="#d5d5d5" stroke="#666" />
      <path d="M1 8.500h11" stroke="#888" />
    </svg>
  );
}

function LaszloLogo() {
  const dots = [[6, 5], [16, 5], [6, 16], [16, 16], [6, 28], [16, 28], [28, 28]];
  return (
    <Art width="34" height="33" viewBox="0 0 34 33" aria-hidden="true">
      {dots.map(([x, y]) => <circle key={`${x}${y}`} cx={x} cy={y} r="5" fill="#f2f2f2" />)}
      <path d="M6 16L16 5M6 16L16 28M6 5H10M6 28H16" stroke="#f2f2f2" strokeWidth="5" />
    </Art>
  );
}

/* ---------- composed parts ---------- */

function BrowserTab({ icon, title, active }) {
  return (
    <Tab $active={active}>
      {icon}
      <TabLabel>{title}</TabLabel>
      <TabClose type="button" aria-label={`Close ${title}`}><CloseIcon /></TabClose>
    </Tab>
  );
}

function Chart({ tinted, netValue, marketValue, children }) {
  return (
    <ChartBox>
      <ReadOut>
        <ReadOutStrip>
          <ReadOutDate>02/21/2007</ReadOutDate>
          <ReadOutItem $strong $tone="#1188e0">Net Investments</ReadOutItem>
          <ReadOutItem $tone="#1188e0">{netValue}</ReadOutItem>
          <ReadOutItem $strong $tone="#000066">Market Value</ReadOutItem>
          <ReadOutItem $tone="#000066">{marketValue}</ReadOutItem>
        </ReadOutStrip>
      </ReadOut>
      <Legend $tinted={tinted}>
        <LegendItem><Swatch $tone="#1188e0" />Net Investment</LegendItem>
        <LegendItem><Swatch $tone="#000066" />Market Value</LegendItem>
      </Legend>
      {children}
    </ChartBox>
  );
}

function Holding({ tinted, name, shares, price, trend, change, percent, from, to, children }) {
  return (
    <HoldingRow $tinted={tinted}>
      <NameCell scope="row">{name}</NameCell>
      <Cell>{shares}</Cell>
      <Cell>{price}</Cell>
      <Cell $tone={trend}>
        <svg width="10" height="7" viewBox="0 0 10 7" aria-hidden="true">
          {trend === "up"
            ? <><path d="M5 0l5 6H0z" fill="#66bb66" /><path d="M0 6h10" stroke="#006600" /></>
            : <path d="M0 0h10L5 7z" fill="#bb0000" />}
        </svg>
        <Delta>{change}</Delta>
      </Cell>
      <Cell $tone={trend}>{percent}</Cell>
      <Cell>{from}</Cell>
      <Cell>{to}</Cell>
      <CollapseCell><CollapseKey type="button">collapse</CollapseKey></CollapseCell>
      <ChartCell>{children}</ChartCell>
    </HoldingRow>
  );
}

function Spin({ id, label, value }) {
  return (
    <SpinBox>
      <SpinSelect id={id} aria-label={label} defaultValue={value}>
        <option>{value}</option>
      </SpinSelect>
      <SpinArrows><UpDown /></SpinArrows>
    </SpinBox>
  );
}

function DateRow({ id, label }) {
  return (
    <RangeRow>
      <RangeLabel htmlFor={id}>{label}</RangeLabel>
      <Spin id={id} value="Jan" />
      <Spin label={`${label} day`} value="1" />
      <Spin label={`${label} year`} value="2007" />
    </RangeRow>
  );
}

const dockApps = [
  ["finder", true], ["compass", true], ["prefs"], [null], ["firefox", true], ["bird", true], ["duck", true], [null],
  ["sphere", true], ["terminal", true], ["p4"], [null], ["notes", true], ["gold", true], [null], ["photos"],
  ["clock", true], ["palette", true], ["console", true], ["explorer", true],
];

export default function App() {
  return (
    <>
      <Global />
      <Desktop>
        <MenuBar>
          <AppleMark><FaApple size="19" /></AppleMark>
          <MenuItem href="#firefox" $strong>Firefox</MenuItem>
          {["File", "Edit", "View", "History", "Bookmarks", "Tools", "Window", "Help"].map((m) => (
            <MenuItem key={m} href={`#${m.toLowerCase()}`}>{m}</MenuItem>
          ))}
          <StatusArea>
            <StatusIcons />
            <Battery><BatteryIcon />(100%)</Battery>
            <Clock>Fri 12:50 PM</Clock>
            <SearchIcon />
          </StatusArea>
        </MenuBar>

        <Workspace>
          <Dock>
            <ArtDefs />
            <DockApps>
              {dockApps.map(([art, running], i) => <DockItem key={i} art={art} running={running} />)}
            </DockApps>
            <DockShelf>
              <DockItem art="shot" />
              <DockItem art="trash" />
            </DockShelf>
          </Dock>

          <Browser>
            <TitleBar>
              <Lights>
                <Light type="button" aria-label="Close" $glow="#ff9a9a" $tone="#b8262a" />
                <Light type="button" aria-label="Minimize" $glow="#ffe27a" $tone="#d9801c" />
                <Light type="button" aria-label="Zoom" $glow="#b8f08a" $tone="#3a8a26" />
              </Lights>
              <WindowTitle>OpenLaszlo Application</WindowTitle>
              <TitleEnd><Pill type="button" aria-label="Toggle toolbar" /></TitleEnd>
            </TitleBar>
            <TabStrip>
              <BrowserTab icon={<LaszloTabIcon />} title="OpenLaszlo Application" />
              <BrowserTab icon={<LaszloTabIcon />} title="OpenLaszlo Application" active />
              <BrowserTab icon={<GlobeTabIcon />} title="Counterpath > Creative Design" />
              <BrowserTab icon={<FlagTabIcon />} title="Windows Live Hotmail" />
              <TabMenu type="button" aria-label="All tabs">▼</TabMenu>
            </TabStrip>

            <Viewport>
              <Page>
                <PageBody>
                  <Panel>
                    <PanelHead>
                      <PanelName>Portfolio</PanelName>
                      <Chevron width="4" height="6" viewBox="0 0 4 6" aria-hidden="true">
                        <path d="M.5 0l3 3-3 3" fill="none" stroke={navy} />
                      </Chevron>
                      <TextLink href="#return">Return</TextLink>
                      <WindowKeys>
                        <WindowKey type="button">-</WindowKey>
                        <WindowKey type="button">X</WindowKey>
                      </WindowKeys>
                    </PanelHead>

                    <ViewPicker>
                      <ViewSelect aria-label="I Want To View" defaultValue="I Want To View:">
                        <option>I Want To View:</option>
                      </ViewSelect>
                      <PickerCap><UpDown size={7} color="#000" /></PickerCap>
                    </ViewPicker>

                    <Tracker>
                      <TrackerHead>
                        <TrackerTitle>Portfolio Growth Tracker</TrackerTitle>
                        <TrackerDates>(10/25/2000 to 01/29/2007)</TrackerDates>
                        <IconLink><HelpIcon /><TextLink href="#help">Help</TextLink></IconLink>
                        <IconLink><PrintIcon /><TextLink href="#print">Print</TextLink></IconLink>
                      </TrackerHead>

                      <Sheet>
                        <CloseRow>
                          <CloseWindow type="button"><CloseBadge>X</CloseBadge>Close Window</CloseWindow>
                        </CloseRow>

                        <SectionTitle>Performance</SectionTitle>
                        <SummaryTable>
                          <tbody>
                            <tr>
                              <YearCell rowSpan={2} scope="row">
                                1 Year Summary
                                <Gauge>
                                  <GaugePart $share={6} $tone="#990000" />
                                  <GaugePart $share={12} $tone="#cc8080" />
                                  <GaugePart $share={63} $tone="#80cc80" />
                                  <GaugePart $share={34} $tone="#009900" />
                                </Gauge>
                              </YearCell>
                              <SummaryCell $width="130px">Performance Range</SummaryCell>
                              <SummaryCell $strong>&lt; -5%</SummaryCell>
                            </tr>
                            <tr>
                              <SummaryCell $last>Number of Accounts</SummaryCell>
                              <SummaryCell $last $strong>1234</SummaryCell>
                            </tr>
                          </tbody>
                        </SummaryTable>

                        <Holdings>
                          <HoldingsTable>
                            <HeadGroup>
                              <HeadRow>
                                <HeadCell>Chart</HeadCell>
                                <HeadCell>Account</HeadCell>
                                <HeadCell>Shares</HeadCell>
                                <HeadCell>Share Price</HeadCell>
                                <HeadCell>$Change<HeadNote>(%)</HeadNote></HeadCell>
                              </HeadRow>
                            </HeadGroup>
                            <ScrollBody>
                              <Holding tinted name="Balanced" shares="100.21" price="23.01" trend="down"
                                change="-2.20" percent="(3.01%)">
                                <Chart tinted netValue="$7824" marketValue="$8219"><BalancedPlot /></Chart>
                              </Holding>
                              <Holding name="Blue Chip Growth" shares="143.32" price="63.01" trend="up"
                                change="2.10" percent="(3.01%)" from="50020.23" to="49000.23">
                                <Chart netValue="$0" marketValue="$0"><BlueChipPlot /></Chart>
                              </Holding>
                            </ScrollBody>
                          </HoldingsTable>
                          <ListBar>
                            <ListThumb><ThumbGrip /></ListThumb>
                            <ListDown type="button" aria-label="Scroll down">
                              <svg width="7" height="5" viewBox="0 0 7 5" aria-hidden="true"><path d="M0 0h7L3.500 5z" fill="#555" /></svg>
                            </ListDown>
                          </ListBar>
                        </Holdings>

                        <DateRange onSubmit={(e) => e.preventDefault()}>
                          <RangeHead>
                            <RangeTitle>Select Date Range</RangeTitle>
                            <CalendarKey type="button" aria-label="Toggle calendar"><CalendarIcon /></CalendarKey>
                          </RangeHead>
                          <DateRow id="start-time" label="Start Time" />
                          <DateRow id="end-time" label="End Time" />
                          <UpdateKey type="submit">Update View</UpdateKey>
                          <RangeNote>( Minimum time period is 1 year. )</RangeNote>
                        </DateRange>
                      </Sheet>
                    </Tracker>
                  </Panel>
                </PageBody>

                <Footer>
                  <Brand><LaszloLogo />Laszlo</Brand>
                  <FooterRows>
                    <FooterRow>
                      <FooterLabel $width="115px">Compile Options:</FooterLabel>
                      <Options onSubmit={(e) => e.preventDefault()}>
                        <Choice><Radio name="swf" />swf6</Choice>
                        <Choice><Radio name="swf" defaultChecked />swf7</Choice>
                        <Choice><Radio name="swf" />swf8</Choice>
                        <Divider />
                        <Choice><Check />Debug</Choice>
                        <FlashKey type="submit">Compile</FlashKey>
                      </Options>
                      <FlashKey type="button">View Source</FlashKey>
                    </FooterRow>
                    <DeployRow>
                      <FooterLabel $width="55px">Deploy:</FooterLabel>
                      <FlashKey type="button" $gap="5px">Server</FlashKey>
                      <FlashKey type="button">SOLO</FlashKey>
                      <DocLinks>
                        <DocLink href="#docs">Documentation</DocLink>
                        <DocLink href="#network">Developer Network</DocLink>
                        <DocLink href="#forums">Developer Forums</DocLink>
                      </DocLinks>
                    </DeployRow>
                  </FooterRows>
                </Footer>
              </Page>

              <ScrollRail>
                <ScrollTrack><ScrollThumb /></ScrollTrack>
                <ScrollEnd type="button" aria-label="Scroll up">
                  <svg width="7" height="6" viewBox="0 0 7 6" aria-hidden="true"><path d="M3.500 0L7 6H0z" fill="#444" /></svg>
                </ScrollEnd>
                <svg width="14" height="14" viewBox="0 0 14 14" aria-hidden="true">
                  <path d="M4 13l9-9M8 13l5-5M11 13l2-2" stroke="#777" />
                </svg>
              </ScrollRail>
            </Viewport>
          </Browser>
        </Workspace>
      </Desktop>
    </>
  );
}
